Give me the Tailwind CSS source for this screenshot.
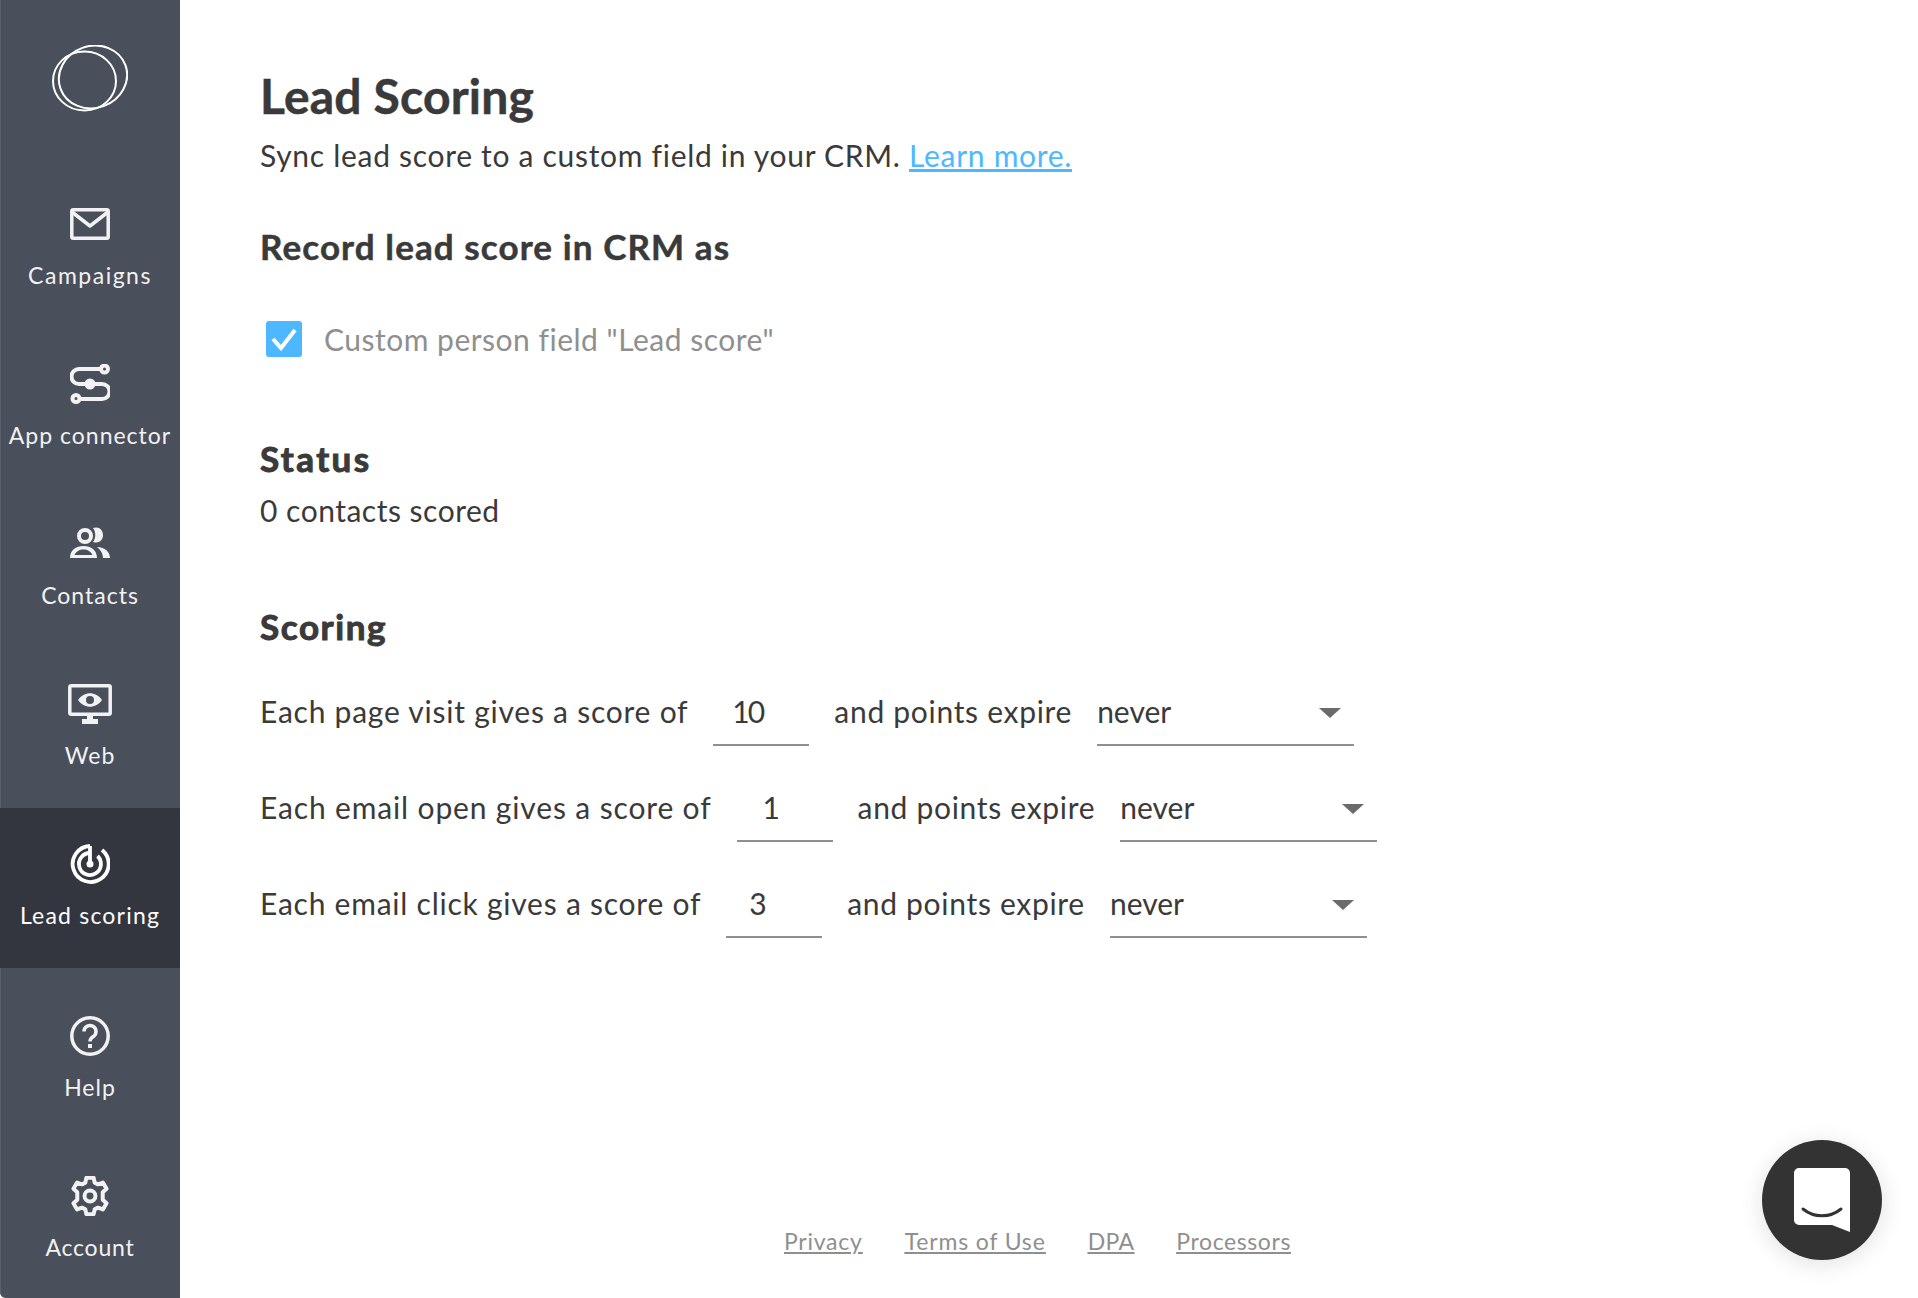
<!DOCTYPE html>
<html lang="en">
<head>
    <meta charset="UTF-8">
    <meta name="viewport" content="width=device-width, initial-scale=1.0">
    <title>Lead Scoring</title>
    <script src="https://cdn.jsdelivr.net/npm/@tailwindcss/browser@4"></script>
</head>
<body class="bg-white font-['Lato',sans-serif] text-[#3a3a3a] h-[1298px] w-[1918px] overflow-hidden">
    <div class="flex h-full">
        <!-- Sidebar -->
        <nav class="w-[180px] h-full shrink-0 bg-[#4a4f5c] shadow-[inset_1px_0_0_#5a5f6b] rounded-bl-[6px] text-[#f2f2f2] flex flex-col overflow-hidden">
            <div class="h-[168px] shrink-0 flex justify-center pt-[45px]">
                <svg class="w-[76px] h-[68px]" viewBox="0 0 76 68" fill="none" stroke="#fff" stroke-width="2">
                    <ellipse cx="32.500" cy="36" rx="31.500" ry="29.500"></ellipse>
                    <ellipse cx="41" cy="32" rx="34.500" ry="31" transform="rotate(-20 41 32)"></ellipse>
                </svg>
            </div>

            <a class="h-[160px] shrink-0 pt-[36px] flex flex-col items-center">
                <svg class="w-[40px] h-[40px]" viewBox="0 0 40 40" fill="none" stroke="#f2f2f2" stroke-width="3.500" stroke-linejoin="round">
                    <rect x="1.800" y="5.800" width="36.400" height="28.400" rx="1.500"></rect>
                    <path d="M2 8l18 14L38 8"></path>
                </svg>
                <span class="mt-[15px] text-[23px] leading-[32px] tracking-[1.500px]">Campaigns</span>
            </a>
            <a class="h-[160px] shrink-0 pt-[36px] flex flex-col items-center">
                <svg class="w-[40px] h-[40px]" viewBox="0 0 40 40" fill="none" stroke="#f2f2f2" stroke-width="4">
                    <path d="M30 5H9a7.500 7.500 0 0 0 0 15h23a7.500 7.500 0 0 1 0 15H11"></path>
                    <circle cx="34.500" cy="5" r="3.500"></circle>
                    <circle cx="6" cy="34.500" r="3.500"></circle>
                    <circle cx="20" cy="20" r="5.500" fill="#f2f2f2" stroke="none"></circle>
                </svg>
                <span class="mt-[15px] text-[23px] leading-[32px] tracking-[1px] whitespace-nowrap">App connector</span>
            </a>
            <a class="h-[160px] shrink-0 pt-[36px] flex flex-col items-center">
                <svg class="w-[40px] h-[40px]" viewBox="0 0 40 40" fill="none">
                    <circle cx="15" cy="12" r="6" stroke="#f2f2f2" stroke-width="4"></circle>
                    <path d="M23 4c6-2 10 2 10 7s-4 9-10 7c3-4 3-10 0-14z" fill="#f2f2f2"></path>
                    <path d="M0 34c0-8 6-12 13.500-12S27 26 27 34zM4.500 31h18c-1.500-3.500-5-5.500-9-5.500s-7.500 2-9 5.500z" fill="#f2f2f2" fill-rule="evenodd"></path>
                    <path d="M27 23c8 0 13 5 13 11h-7c0-4-2-8-6-11z" fill="#f2f2f2"></path>
                </svg>
                <span class="mt-[15px] text-[23px] leading-[32px] tracking-[1px]">Contacts</span>
            </a>
            <a class="h-[160px] shrink-0 pt-[36px] flex flex-col items-center">
                <svg class="w-[44px] h-[40px]" viewBox="0 0 44 40" fill="none">
                    <rect x="1.800" y="1.800" width="40.400" height="28.400" rx="1.500" stroke="#f2f2f2" stroke-width="3.500"></rect>
                    <path d="M10 16c6-9 18-9 24 0-6 9-18 9-24 0z" fill="#f2f2f2"></path>
                    <circle cx="22" cy="16" r="4" fill="#4a4f5c"></circle>
                    <path d="M19 30h6v5h-6zM14 35h16v5H14z" fill="#f2f2f2"></path>
                </svg>
                <span class="mt-[15px] text-[23px] leading-[32px] tracking-[1px]">Web</span>
            </a>
            <a class="h-[160px] shrink-0 pt-[36px] flex flex-col items-center bg-[#33363f] text-white">
                <svg class="w-[40px] h-[40px]" viewBox="0 0 40 40" fill="none" stroke="#fff" stroke-width="3.800">
                    <path d="M20 2A18 18 0 1 0 32 6"></path>
                    <path d="M20 9A11 11 0 1 0 27.500 12"></path>
                    <path d="M20 2v18"></path>
                    <circle cx="20" cy="20" r="3.500" fill="#fff" stroke="none"></circle>
                </svg>
                <span class="mt-[15px] text-[23px] leading-[32px] tracking-[1.200px] whitespace-nowrap">Lead scoring</span>
            </a>
            <a class="h-[160px] shrink-0 mt-[12px] pt-[36px] flex flex-col items-center">
                <svg class="w-[40px] h-[40px]" viewBox="0 0 40 40" fill="none" stroke="#f2f2f2" stroke-width="3.500">
                    <circle cx="20" cy="20" r="18.200"></circle>
                    <path d="M14 15.500a6 6 0 1 1 9 5.200c-2 1.200-3 2.300-3 4.800"></path>
                    <path d="M18 28h4v4h-4z" fill="#f2f2f2" stroke="none"></path>
                </svg>
                <span class="mt-[15px] text-[23px] leading-[32px] tracking-[1px]">Help</span>
            </a>
            <a class="h-[160px] shrink-0 pt-[36px] flex flex-col items-center">
                <svg class="w-[40px] h-[40px]" viewBox="1 1 22 22" fill="none" stroke="#f2f2f2" stroke-width="2.200" stroke-linejoin="round">
                    <path d="M10 2h4l.6 2.700 1.800.9 2.700-1 2 3.400-2.100 1.900v4.200l2.100 1.900-2 3.400-2.700-1-1.800.9L14 22h-4l-.6-2.700-1.800-.9-2.700 1-2-3.400 2.100-1.900V9.900L2.900 8l2-3.400 2.700 1 1.800-.9z"></path>
                    <circle cx="12" cy="12" r="3"></circle>
                </svg>
                <span class="mt-[15px] text-[23px] leading-[32px] tracking-[0.8px]">Account</span>
            </a>
        </nav>

        <!-- Main -->
        <main class="flex-1 relative pl-[80px] pt-[66px]">
            <h1 class="text-[48px] leading-[60px] font-bold tracking-[0.2px] [-webkit-text-stroke:0.5px_#3a3a3a]">Lead Scoring</h1>
            <p class="mt-[9px] text-[30px] leading-[40px] tracking-[0.7px]">Sync lead score to a custom field in your CRM. <a class="text-[#4db8ff] underline">Learn more.</a></p>

            <h2 class="mt-[49px] text-[35px] leading-[44px] font-bold tracking-[1.100px] [-webkit-text-stroke:0.5px_#3a3a3a]">Record lead score in CRM as</h2>
            <div class="mt-[49px] flex items-center h-[44px]">
                <span class="ml-[6px] w-[36px] h-[36px] rounded-[3px] bg-[#4db8ff] flex items-center justify-center">
                    <svg class="w-[28px] h-[28px]" viewBox="0 0 28 28" fill="none" stroke="#fff" stroke-width="4">
                        <path d="M3 14l8 9L25 5"></path>
                    </svg>
                </span>
                <span class="ml-[22px] text-[30px] tracking-[0.5px] text-[#8f8f8f]">Custom person field "Lead score"</span>
            </div>

            <h2 class="mt-[75px] text-[35px] leading-[44px] font-bold tracking-[2.400px] [-webkit-text-stroke:1px_#3a3a3a]">Status</h2>
            <p class="mt-[10px] text-[30px] leading-[40px] tracking-[0.5px]">0 contacts scored</p>

            <h2 class="mt-[74px] text-[35px] leading-[44px] font-bold tracking-[1.600px] [-webkit-text-stroke:1px_#3a3a3a]">Scoring</h2>

            <div class="mt-[43px] flex flex-col gap-[41px] text-[30px] leading-[40px]">
                <div class="flex items-start gap-[25px]">
                    <span class="tracking-[0.76px]">Each page visit gives a score of</span>
                    <div class="w-[96px] h-[55px] border-b-2 border-[#8f8f8f] pl-[19px] tracking-[-2px]">10</div>
                    <span class="tracking-[0.7px]">and points expire</span>
                    <div class="w-[257px] h-[55px] border-b-2 border-[#8f8f8f] flex justify-between">
                        <span>never</span>
                        <svg class="w-[22px] h-[10px] mt-[17px] mr-[13px]" viewBox="0 0 22 10" fill="#6b6b6b"><path d="M0 0h22L11 10z"></path></svg>
                    </div>
                </div>
                <div class="flex items-start gap-[25px]">
                    <span class="tracking-[0.85px]">Each email open gives a score of</span>
                    <div class="w-[96px] h-[55px] border-b-2 border-[#8f8f8f] pl-[26px]">1</div>
                    <span class="tracking-[0.7px]">and points expire</span>
                    <div class="w-[257px] h-[55px] border-b-2 border-[#8f8f8f] flex justify-between">
                        <span>never</span>
                        <svg class="w-[22px] h-[10px] mt-[17px] mr-[13px]" viewBox="0 0 22 10" fill="#6b6b6b"><path d="M0 0h22L11 10z"></path></svg>
                    </div>
                </div>
                <div class="flex items-start gap-[25px]">
                    <span class="tracking-[0.76px]">Each email click gives a score of</span>
                    <div class="w-[96px] h-[55px] border-b-2 border-[#8f8f8f] pl-[23px]">3</div>
                    <span class="tracking-[0.7px]">and points expire</span>
                    <div class="w-[257px] h-[55px] border-b-2 border-[#8f8f8f] flex justify-between">
                        <span>never</span>
                        <svg class="w-[22px] h-[10px] mt-[17px] mr-[13px]" viewBox="0 0 22 10" fill="#6b6b6b"><path d="M0 0h22L11 10z"></path></svg>
                    </div>
                </div>
            </div>

            <footer class="absolute top-[1225px] left-[604px] flex gap-[42px] text-[23px] leading-[32px] tracking-[0.75px] text-[#8f8f8f] underline">
                <a>Privacy</a>
                <a class="tracking-[0.85px]">Terms of Use</a>
                <a class="tracking-[0.3px]">DPA</a>
                <a class="tracking-[0.6px]">Processors</a>
            </footer>

            <!-- Chat launcher -->
            <button class="absolute left-[1582px] top-[1140px] w-[120px] h-[120px] rounded-full bg-[#333333] shadow-[0_4px_24px_rgba(0,0,0,0.12)] flex items-center justify-center">
                <svg class="w-[56px] h-[64px]" viewBox="0 0 56 64">
                    <path d="M5 0h46a5 5 0 0 1 5 5v59l-18-7H5a5 5 0 0 1-5-5V5a5 5 0 0 1 5-5z" fill="#fff"></path>
                    <path d="M9 41c11 9 27 9 38 0" fill="none" stroke="#333" stroke-width="3" stroke-linecap="round"></path>
                </svg>
            </button>
        </main>
    </div>
</body>
</html>
